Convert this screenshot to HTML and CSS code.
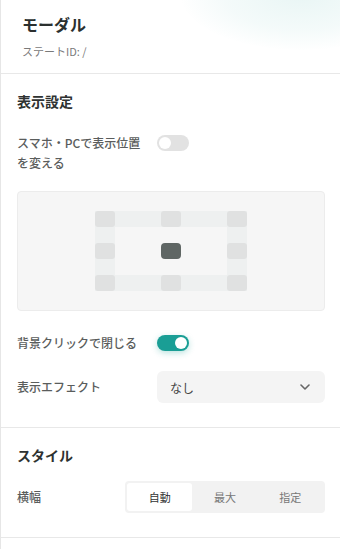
FILE: index.html
```html
<!DOCTYPE html>
<html lang="ja">
<head>
<meta charset="utf-8">
<link rel="stylesheet" href="styles.css">
</head>
<body>
<div class="panel">
  <div class="glow"></div>
  <header class="head">
    <h1 class="title">モーダル</h1>
    <p class="sub">ステートID: /</p>
  </header>
  <section class="section">
    <h2 class="heading">表示設定</h2>
    <div class="row row-top">
      <span class="label label-wide">スマホ・PCで表示位置を変える</span>
      <span class="toggle"><span class="knob"></span></span>
    </div>
    <div class="preview">
      <div class="grid">
        <span class="cell c1 r1"></span><span class="cell c3 r1"></span><span class="cell c5 r1"></span>
        <span class="cell c1 r3"></span><span class="cell dark c3 r3"></span><span class="cell c5 r3"></span>
        <span class="cell c1 r5"></span><span class="cell c3 r5"></span><span class="cell c5 r5"></span>
      </div>
    </div>
    <div class="row row-mid row-bg">
      <span class="label label-wide">背景クリックで閉じる</span>
      <span class="toggle on"><span class="knob"></span></span>
    </div>
    <div class="row row-mid row-fx">
      <span class="label">表示エフェクト</span>
      <div class="select">
        <span>なし</span>
        <svg class="chev" width="10" height="6" viewBox="0 0 10 6"><path d="M1 1l4 4 4-4" fill="none" stroke="#666" stroke-width="1.6" stroke-linecap="round" stroke-linejoin="round"/></svg>
      </div>
    </div>
  </section>
  <section class="section">
    <h2 class="heading">スタイル</h2>
    <div class="row row-mid row-style">
      <span class="label">横幅</span>
      <div class="seg">
        <span class="seg-btn active">自動</span>
        <span class="seg-btn">最大</span>
        <span class="seg-btn">指定</span>
      </div>
    </div>
  </section>
</div>
</body>
</html>
```
FILE: styles.css
```css
* { box-sizing: border-box; }
html, body { margin: 0; padding: 0; background: #fff; }
body {
  font-family: "Noto Sans CJK JP", "Noto Sans", sans-serif;
  color: #333;
}
.panel {
  position: relative;
  width: 340px;
  min-height: 549px;
  border-left: 1px solid #e6e6e6;
  overflow: hidden;
}
.glow {
  position: absolute;
  left: 180px;
  top: -60px;
  width: 240px;
  height: 110px;
  border-radius: 50%;
  background: radial-gradient(ellipse at center, rgba(40,165,155,0.10) 0%, rgba(40,165,155,0.05) 45%, rgba(40,165,155,0) 72%);
  pointer-events: none;
}
.head {
  position: relative;
  padding: 12px 21px 14px;
  border-bottom: 1px solid #e8e8e8;
}
.title {
  margin: 0;
  font-size: 16px;
  line-height: 24px;
  font-weight: 700;
  color: #2b302f;
}
.sub {
  margin: 7px 0 0;
  font-size: 11px;
  line-height: 16px;
  color: #7a7a7a;
}
.section {
  padding: 17px 15px 24px 16px;
  border-bottom: 1px solid #e8e8e8;
}
.heading {
  margin: 0;
  font-size: 14px;
  line-height: 20px;
  font-weight: 700;
  color: #2e3231;
}
.row {
  display: flex;
  justify-content: space-between;
}
.row-top { margin-top: 22px; align-items: flex-start; }
.row-mid { align-items: center; }
.row-bg { margin-top: 22px; }
.row-fx { margin-top: 18px; }
.row-style { margin-top: 16px; }
.label {
  font-size: 12px;
  line-height: 20px;
  font-weight: 500;
  color: #5a5d5c;
}
.label-wide { width: 140px; padding-right: 12px; flex: none; }
.row .toggle { margin-right: auto; }
.row-top .toggle { margin-top: 2px; }
.toggle {
  display: flex;
  align-items: center;
  width: 32px;
  height: 16px;
  padding: 0 2px;
  border-radius: 8px;
  background: #e2e2e2;
  flex: none;
}
.knob {
  width: 12px;
  height: 12px;
  border-radius: 50%;
  background: #fff;
}
.toggle.on {
  background: #1a9e95;
  justify-content: flex-end;
  box-shadow: 0 2px 6px rgba(26,158,149,0.3);
}
.preview {
  margin-top: 18px;
  height: 120px;
  border: 1px solid #ececec;
  border-radius: 4px;
  background: #f6f6f6;
  display: flex;
  align-items: center;
  justify-content: center;
}
.grid {
  width: 152px;
  height: 80px;
  display: grid;
  grid-template-columns: 20px 46px 20px 46px 20px;
  grid-template-rows: repeat(5, 16px);
  background: linear-gradient(#f6f6f6, #f6f6f6) center / 112px 48px no-repeat, #eef0f0;
}
.cell { border-radius: 3px; background: #e0e1e1; }
.cell.dark { background: #5f6664; border-radius: 4px; }
.c1 { grid-column: 1; } .c3 { grid-column: 3; } .c5 { grid-column: 5; }
.r1 { grid-row: 1; } .r3 { grid-row: 3; } .r5 { grid-row: 5; }
.select {
  width: 168px;
  height: 32px;
  flex: none;
  border-radius: 6px;
  background: #f4f4f4;
  display: flex;
  align-items: center;
  justify-content: space-between;
  padding: 0 15px 0 13px;
  font-size: 12px;
  color: #444;
}
.seg {
  width: 200px;
  height: 32px;
  flex: none;
  padding: 2px;
  border-radius: 4px;
  background: #f2f2f2;
  display: flex;
}
.seg-btn {
  flex: 1;
  display: flex;
  align-items: center;
  justify-content: center;
  font-size: 11px;
  color: #777;
  border-radius: 3px;
}
.seg-btn.active { background: #fff; color: #333; }
```
